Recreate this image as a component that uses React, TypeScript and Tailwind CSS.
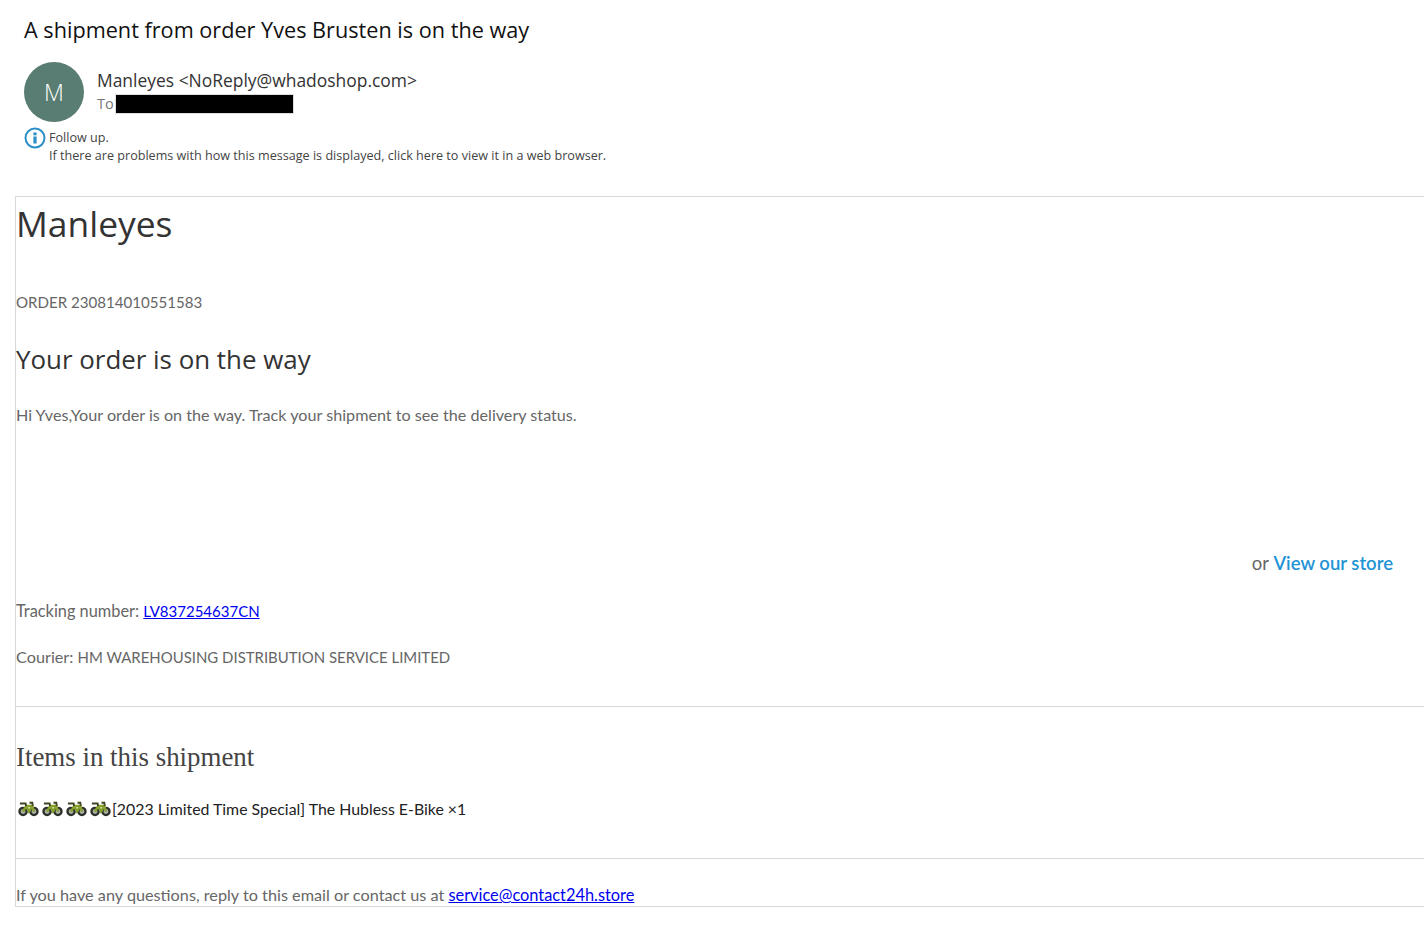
function Bike() {
  return (
    <svg width="21" height="16" viewBox="0 0 22 16" className="shrink-0">
      <circle cx="5.3" cy="10.6" r="3.8" fill="#a9ada0" stroke="#2c2f28" strokeWidth="2.4" />
      <circle cx="16.7" cy="10.6" r="3.8" fill="#a9ada0" stroke="#2c2f28" strokeWidth="2.4" />
      <path d="M5.3 10.6 L8.5 4.8 H15 L16.7 10.6 M8.5 4.8 L11.5 10.6 L15 4.8" fill="none" stroke="#86a02e" strokeWidth="2.6" />
      <path d="M2 2.2 H8 L8.5 4.8 M12 1.5 H15 L15.5 4.8" fill="none" stroke="#3f4528" strokeWidth="2" />
    </svg>
  );
}

export default function App() {
  return (
    <div className="h-[943px] w-[1424px] overflow-hidden bg-white">
      <div className="pl-6 pt-[15px] font-['Open_Sans',sans-serif]">
        <h1 className="text-[21.66px] leading-[30px] text-[#111]">A shipment from order Yves Brusten is on the way</h1>
        <div className="mt-[17px] flex">
          <div className="flex h-[60px] w-[60px] items-center justify-center rounded-full bg-[#5a7d73] text-[23px] font-light text-white">M</div>
          <div className="ml-[13px] pt-[6px]">
            <div className="text-[17.45px] leading-[25px] text-[#333]">Manleyes &lt;NoReply@whadoshop.com&gt;</div>
            <div className="flex h-[22px] items-center text-[14.5px] text-[#777]">
              To<span className="ml-[1px] h-[20px] w-[179px] border border-[#ddd] bg-black" />
            </div>
          </div>
        </div>
        <div className="mt-[5px] flex">
          <svg width="22" height="22" viewBox="0 0 22 22" className="shrink-0">
            <circle cx="11" cy="11" r="9.5" fill="#fff" stroke="#2a8fc7" strokeWidth="2" />
            <rect x="9.4" y="9.5" width="3.2" height="7" fill="#2a8fc7" />
            <rect x="9.4" y="5.5" width="3.2" height="2.8" fill="#2a8fc7" />
          </svg>
          <div className="ml-[3px] text-[12.6px] leading-[18px] text-[#444]">
            <div className="pt-[2px]">Follow up.</div>
            <div>If there are problems with how this message is displayed, click here to view it in a web browser.</div>
          </div>
        </div>
      </div>

      <div className="ml-[15px] mt-[31px] h-[711px] border border-r-0 border-[#d9d9d9] font-['Lato',sans-serif] text-[16.17px] text-[#666]">
        <div className="pt-[2px] font-['Open_Sans',sans-serif] text-[35.4px] leading-[48px] text-[#333]">Manleyes</div>
        <div className="mt-[44px] text-[15.1px] leading-[22px]">ORDER 230814010551583</div>
        <h2 className="mt-[29px] font-['Open_Sans',sans-serif] text-[25.9px] leading-[34px] text-[#333]">Your order is on the way</h2>
        <p className="mt-[28px] leading-[22px]">Hi Yves,Your order is on the way. Track your shipment to see the delivery status.</p>
        <div className="mt-[125px] pr-[31px] text-right text-[18.5px] leading-[24px]">
          or <span className="font-semibold text-[#2293d5]">View our store</span>
        </div>
        <p className="mt-[25px] text-[16.35px] leading-[22px]">
          Tracking number: <a className="text-[15px] text-[#0000ee] underline">LV837254637CN</a>
        </p>
        <p className="mt-[24px] text-[16.25px] leading-[22px]">
          Courier: <span className="text-[14.94px]">HM WAREHOUSING DISTRIBUTION SERVICE LIMITED</span>
        </p>
        <div className="mt-[38px] border-t border-[#d9d9d9]" />
        <h3 className="mt-[33px] font-['Liberation_Serif',serif] text-[26.9px] leading-[34px] text-[#444]">Items in this shipment</h3>
        <div className="mt-[24px] flex items-center text-[15.87px] leading-[22px] text-[#222]">
          <span className="ml-[2px] flex gap-[3px]"><Bike /><Bike /><Bike /><Bike /></span>
          <span className="ml-[1px]">[2023 Limited Time Special] The Hubless E-Bike ×1</span>
        </div>
        <div className="mt-[38px] border-t border-[#d9d9d9]" />
        <p className="mt-[25px] text-[16.24px] leading-[22px]">
          If you have any questions, reply to this email or contact us at <a className="text-[16.35px] text-[#0000ee] underline">service@contact24h.store</a>
        </p>
      </div>
    </div>
  );
}
